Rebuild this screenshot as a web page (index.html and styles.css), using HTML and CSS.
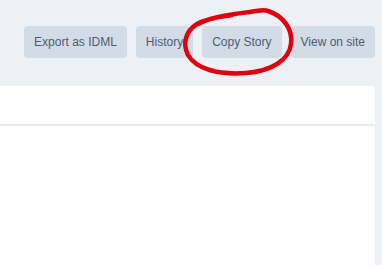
FILE: index.html
```html
<!DOCTYPE html>
<html>
<head>
<meta charset="utf-8">
<link rel="stylesheet" href="styles.css">
</head>
<body>
<div class="toolbar">
  <button class="btn">Export as IDML</button>
  <button class="btn">History</button>
  <button class="btn">Copy Story</button>
  <button class="btn">View on site</button>
</div>
<div class="card">
  <div class="card-head"></div>
  <div class="card-body"></div>
</div>
<svg class="annotation" width="382" height="265" viewBox="0 0 382 265">
  <path d="M 198 24 C 210 17, 232 14, 250 12 C 258 11, 264 9, 268 11 C 284 16, 293 30, 291 44 C 289 60, 272 71, 246 73 C 218 75, 196 69, 188 55 C 182 43, 186 31, 197 24 C 207 18, 220 17, 232 15" fill="none" stroke="#e3000d" stroke-width="4.5" stroke-linecap="round" stroke-linejoin="round"/>
</svg>
</body>
</html>
```

FILE: styles.css
```css
html, body {
  margin: 0;
  padding: 0;
}
body {
  background: #edf1f5;
  width: 382px;
  height: 265px;
  overflow: hidden;
  position: relative;
  display: flex;
  flex-direction: column;
  font-family: "Liberation Sans", Arial, sans-serif;
}
.toolbar {
  display: flex;
  justify-content: flex-end;
  gap: 9px;
  padding: 26px 7px 0 0;
}
.btn {
  height: 32px;
  padding: 0 10px;
  border: none;
  border-radius: 4px;
  background: #d3dce6;
  color: #4b5b78;
  font-family: "Liberation Sans", Arial, sans-serif;
  font-size: 12px;
  line-height: 32px;
}
.card {
  flex: 1;
  margin: 28px 7px 0 0;
  background: #ffffff;
  border-top-right-radius: 4px;
}
.card-head {
  height: 38px;
  border-bottom: 2px solid #e7ecf1;
}
.annotation {
  position: absolute;
  left: 0;
  top: 0;
  pointer-events: none;
}
```
